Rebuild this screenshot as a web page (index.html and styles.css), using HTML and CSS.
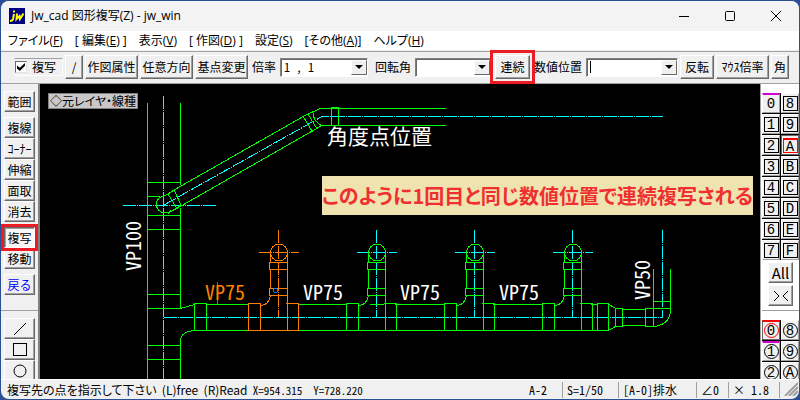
FILE: index.html
```html
<!DOCTYPE html>
<html lang="ja">
<head>
    <meta charset="UTF-8">
    <meta name="viewport" content="width=device-width, initial-scale=1.0">
    <title>Jw_cad 図形複写(Z) - jw_win</title>
    <link rel="stylesheet" href="styles.css">
</head>
<body>
<div class="window">
    <header class="titlebar">
        <svg class="app-icon" width="16" height="16" viewBox="0 0 16 16">
            <rect width="16" height="16" fill="#000080"/>
            <path d="M4 3.500h2M5 6L4 11Q3.500 13 1 13M8 5.500L7.500 11L10.500 8L11 11L14.500 5.500" fill="none" stroke="#ffff00" stroke-width="2"/>
        </svg>
        <h1>Jw_cad 図形複写(Z) - jw_win</h1>
        <div class="window-buttons">
            <button aria-label="最小化"><svg width="12" height="12"><path d="M1 6.500h10"/></svg></button>
            <button aria-label="最大化"><svg width="12" height="12"><rect x="1.500" y="1.500" width="9" height="9" rx="1"/></svg></button>
            <button aria-label="閉じる"><svg width="12" height="12"><path d="M1 1l10 10M11 1L1 11"/></svg></button>
        </div>
    </header>

    <nav class="menu">
        <a href="#">ファイル(<u>F</u>)</a>
        <a href="#">[ 編集(<u>E</u>) ]</a>
        <a href="#">表示(<u>V</u>)</a>
        <a href="#">[ 作図(<u>D</u>) ]</a>
        <a href="#">設定(<u>S</u>)</a>
        <a href="#">[その他(<u>A</u>)]</a>
        <a href="#">ヘルプ(<u>H</u>)</a>
    </nav>

    <div class="toolbar">
        <label class="check"><input type="checkbox" checked>複写</label>
        <button class="btn narrow">/</button>
        <button class="btn wide">作図属性</button>
        <button class="btn wide">任意方向</button>
        <button class="btn wide">基点変更</button>
        <label class="caption" for="scale">倍率</label>
        <div class="combo combo-scale">
            <select id="scale"><option>1 , 1</option></select>
            <span class="arrow"></span>
        </div>
        <label class="caption spaced" for="angle">回転角</label>
        <div class="combo combo-angle">
            <select id="angle"><option></option></select>
            <span class="arrow"></span>
        </div>
        <button class="btn repeat marked">連続</button>
        <label class="caption" for="offset">数値位置</label>
        <div class="combo combo-offset">
            <input type="text" id="offset" class="editing">
            <button class="arrow" aria-label="数値位置の履歴"></button>
        </div>
        <button class="btn">反転</button>
        <button class="btn wide">ﾏｳｽ倍率</button>
        <button class="btn narrow">角</button>
    </div>

    <main>
        <aside class="tools">
            <div class="tool-group">
                <button class="btn">範囲</button>
            </div>
            <div class="tool-group">
                <button class="btn">複線</button>
                <button class="btn">ｺｰﾅｰ</button>
                <button class="btn">伸縮</button>
                <button class="btn">面取</button>
                <button class="btn">消去</button>
            </div>
            <div class="tool-group">
                <button class="btn pressed marked">複写</button>
                <button class="btn">移動</button>
            </div>
            <div class="tool-group">
                <button class="btn undo">戻る</button>
            </div>
            <div class="tool-group shapes">
                <button class="btn" aria-label="線"><svg width="14" height="14"><path d="M1 13L13 1"/></svg></button>
                <button class="btn" aria-label="矩形"><svg width="14" height="14"><rect x="0.500" y="0.500" width="13" height="12"/></svg></button>
                <button class="btn" aria-label="円"><svg width="14" height="14"><circle cx="7" cy="7" r="6"/></svg></button>
            </div>
        </aside>

        <section class="canvas">
            <svg class="drawing" width="100%" height="100%">
                <defs>
                    <!-- tee joint with its riser, drawn around x = 0 -->
                    <g id="tee">
                        <path d="M-30.500 303.500h12v27h-12zM8.500 303.500h11v27h-11zM-18.500 330.500h27M6.500 303.500h2"/>
                        <path d="M-18.500 305.500q8 0 10-10M8.500 295.500v8"/>
                        <path d="M-9.500 288.500h18v7h-18zM-8.500 269.500v19M8.500 269.500v19M-9.500 262.500h18v7h-18zM-8.500 252.500v10M8.500 252.500v10"/>
                        <circle cx="0" cy="252.500" r="8.500"/>
                    </g>
                    <g id="tee-axis">
                        <path d="M-19.500 252.500h40M0.500 230v87"/>
                    </g>
                </defs>
                <g transform="translate(-40 -84)">
                    <g class="axis">
                        <path d="M163.500 96v290M123 205.500h94M163.500 317.500H662M662.500 230v88"/>
                        <path d="M163 205.500L322 116.500H663"/>
                        <use href="#tee-axis" x="376"/>
                        <use href="#tee-axis" x="474"/>
                        <use href="#tee-axis" x="572"/>
                    </g>
                    <g class="pipe">
                        <!-- VP100 riser -->
                        <path d="M147.500 103v283M180.500 103v82M180.500 208v100M180.500 339v47"/>
                        <path d="M147 182.500h34M147 196.500h13M147 215.500h34M147 229.500h34M147 294.500h34M147 308.500h34M147 345.500h34M147 359.500h34"/>
                        <!-- slanted branch -->
                        <path d="M171 210.500A8.500 8.500 0 1 1 159 198L168 194L174 190L181 205L175 209L168 213.500"/>
                        <path d="M168 194l9 15M174 190L305 115.500L320 108.500H446M175 209.500L322 125.500H446"/>
                        <path d="M303.500 117l9 15M308 114l9 15M313 112.500q0 8 8 13M331.500 107.500h7v18h-7z"/>
                        <!-- VP75 main -->
                        <path d="M180.500 308.500l14-4M180.500 339q2-8 14-8.500M194.500 303.500h12v27h-12z"/>
                        <path d="M206 304.500h42M206 330.500h42M298 304.500h48M298 330.500h48M370 304.500h14M395 304.500h49M395 330.500h49M493 304.500h49M493 330.500h49M591 304.500h6M591 330.500h6"/>
                        <use href="#tee" x="377"/>
                        <use href="#tee" x="475"/>
                        <use href="#tee" x="573"/>
                        <!-- reducer and VP50 elbow -->
                        <path d="M597.500 303.500h11v27h-11zM608.500 304l7 4.500M608.500 330.500l7-4M615.500 308.500h7v18h-7z"/>
                        <path d="M622 309.500h23M622 325.500h23M645.500 308.500h8v18h-8zM653.500 269v40M670.500 269v41M653 301.500h17M653 308.500h17M653.500 326.500Q670.500 325 670.500 309"/>
                    </g>
                    <g class="pipe selected">
                        <use href="#tee" x="279"/>
                        <use href="#tee-axis" class="dashed" x="278"/>
                    </g>
                    <path class="base-line" d="M217.500 282v22"/>
                    <circle class="base-point" cx="275.500" cy="290.500" r="2"/>
                    <text class="picked" x="205" y="300">VP75</text>
                    <text x="303" y="300">VP75</text>
                    <text x="400" y="300">VP75</text>
                    <text x="499" y="300">VP75</text>
                    <text transform="translate(650 300) rotate(-90)">VP50</text>
                    <text transform="translate(141 271) rotate(-90)">VP100</text>
                    <text class="note" x="327" y="144">角度点位置</text>
                </g>
            </svg>
            <button class="layer-label">◇元レイヤ・線種</button>
            <p class="callout">このように1回目と同じ数値位置で連続複写される</p>
        </section>

        <aside class="layers">
            <div class="layer-grid">
                <button class="edit">0</button><button><span>8</span></button>
                <button><span>1</span></button><button><span>9</span></button>
                <button><span>2</span></button><button class="current"><span>A</span></button>
                <button><span>3</span></button><button><span>B</span></button>
                <button><span>4</span></button><button><span>C</span></button>
                <button><span>5</span></button><button><span>D</span></button>
                <button><span>6</span></button><button><span>E</span></button>
                <button><span>7</span></button><button><span>F</span></button>
            </div>
            <div class="layer-actions">
                <button class="btn">All</button>
                <button class="btn" aria-label="レイヤ反転"><svg width="16" height="12"><path d="M1 1l5 5l-5 5M15 1l-5 5l5 5"/></svg></button>
            </div>
            <div class="layer-grid groups">
                <button class="current"><span>0</span></button><button><span>8</span></button>
                <button class="edit"><span>1</span></button><button><span>9</span></button>
                <button><span>2</span></button><button><span>A</span></button>
            </div>
        </aside>
    </main>

    <footer class="status">
        <p>複写先の点を指示して下さい&nbsp; (L)free&nbsp; (R)Read&nbsp; <span class="half">X=954.315&nbsp; Y=728.220</span></p>
        <button class="cell-layer">A-2</button>
        <button class="cell-scale">S=1/50</button>
        <button class="cell-name">[A-0]排水</button>
        <button class="cell-angle">∠0</button>
        <button class="cell-zoom">× 1.8</button>
        <svg class="grip" width="14" height="14"><path d="M1 14L14 1M5 14l9-9M9 14l5-5"/></svg>
    </footer>
</div>
</body>
</html>
```
FILE: styles.css
```css
* {
    box-sizing: border-box;
}

body {
    margin: 0;
    height: 100vh;
    padding: 1px;
    background-color: #2b4f96;
    font-family: "Noto Sans CJK JP", sans-serif;
    font-size: 12px;
    line-height: 16px;
    color: #000;
}

button, input, select {
    font: inherit;
    color: inherit;
    margin: 0;
    padding: 0;
}

h1, p {
    margin: 0;
    font-size: inherit;
    font-weight: normal;
}

.window {
    height: 100%;
    display: flex;
    flex-direction: column;
    background-color: #f0f0f0;
    border-radius: 8px;
    overflow: hidden;
}

/* Title bar */
.titlebar {
    display: flex;
    align-items: center;
    height: 30px;
    flex: none;
    padding-left: 8px;
    background-color: #f3f3f3;
}

.titlebar h1 {
    flex: 1;
    margin-left: 6px;
    font-family: "Open Sans", "Noto Sans CJK JP", sans-serif;
}

.window-buttons {
    display: flex;
}

.window-buttons button {
    display: flex;
    align-items: center;
    justify-content: center;
    width: 46px;
    height: 28px;
    border: none;
    background: none;
}

.window-buttons svg {
    fill: none;
    stroke: #000;
}

/* Menu */
.menu {
    display: flex;
    flex: none;
    align-items: center;
    gap: 12px;
    height: 20px;
    padding-left: 7px;
    background-color: #fff;
    border-bottom: 1px solid #f0f0f0;
    font-family: "Open Sans", "Noto Sans CJK JP", sans-serif;
    font-feature-settings: "palt";
}

.menu a {
    color: #000;
    text-decoration: none;
    white-space: nowrap;
}

/* Buttons */
.btn {
    display: flex;
    align-items: center;
    justify-content: center;
    white-space: nowrap;
    border: 1px solid;
    border-color: #fff #696969 #696969 #fff;
    box-shadow: inset -1px -1px 0 #a0a0a0;
    background-color: #f0f0f0;
}

.btn svg {
    fill: none;
    stroke: #000;
}

.btn.pressed {
    border-color: #696969 #fff #fff #696969;
    box-shadow: inset 1px 1px 0 #a0a0a0;
    background-color: #f8f8f8;
}

.btn.marked {
    position: relative;
    z-index: 2;
    outline: 3px solid #ed1c24;
}

/* Toolbar */
.toolbar {
    display: flex;
    flex: none;
    align-items: center;
    gap: 2px;
    height: 33px;
    padding: 0 10px 1px 13px;
    border-top: 1px solid #a0a0a0;
    border-bottom: 1px solid #a0a0a0;
}

.toolbar .btn {
    flex: none;
    width: 34px;
    height: 24px;
}

.toolbar .btn.narrow {
    width: 18px;
}

.toolbar .btn.wide {
    width: 53px;
}

.toolbar .btn.repeat {
    width: 35px;
    margin-left: 2px;
    outline-offset: 2px;
}

.check {
    display: flex;
    align-items: center;
    flex: none;
    gap: 5px;
    width: 49px;
    height: 18px;
    white-space: nowrap;
    border: 1px solid;
    border-color: #a0a0a0 #fff #fff #f0f0f0;
}

.check input {
    appearance: none;
    flex: none;
    width: 12px;
    height: 12px;
    border: 1px solid;
    border-color: #696969 #e3e3e3 #e3e3e3 #696969;
    background-color: #fff;
}

.check input:checked::before {
    content: "";
    display: block;
    margin: 1px;
    width: 8px;
    height: 8px;
    background-color: #000;
    clip-path: polygon(0 30%, 35% 60%, 100% 0, 100% 35%, 35% 100%, 0 70%);
}

.caption {
    flex: none;
    padding: 0 2px;
    white-space: nowrap;
}

.caption.spaced {
    margin-left: 3px;
}

.combo {
    display: flex;
    flex: none;
    height: 19px;
    border: 1px solid;
    border-color: #808080 #fff #fff #808080;
    box-shadow: inset 1px 1px 0 #696969;
    background-color: #fff;
}

.combo-scale {
    width: 88px;
}

.combo-angle {
    width: 76px;
}

.combo-offset {
    width: 92px;
}

.combo select,
.combo input {
    appearance: none;
    flex: 1;
    min-width: 0;
    padding-left: 3px;
    border: none;
    outline: none;
    background: none;
    font-feature-settings: "hwid";
}

.combo .editing {
    background: linear-gradient(#000, #000) 3px 2px / 1px 12px no-repeat;
}

.arrow {
    display: flex;
    align-items: center;
    justify-content: center;
    flex: none;
    width: 16px;
    margin: 1px 0;
    border: 1px solid;
    border-color: #fff #696969 #696969 #fff;
    background-color: #f0f0f0;
}

.arrow::before {
    content: "";
    border: 4px solid transparent;
    border-top-color: #000;
    border-bottom: none;
}

/* Work area */
main {
    display: flex;
    flex: 1;
    min-height: 0;
}

.tools {
    display: flex;
    flex-direction: column;
    flex: none;
    gap: 5px;
    width: 39px;
    padding: 7px 4px 0 3px;
    border-right: 2px solid #808080;
    overflow: hidden;
}

.tool-group .btn {
    width: 31px;
    height: 21px;
}

.tool-group .marked {
    outline-offset: 0;
}

.tool-group .undo {
    color: #0000ff;
}

.shapes {
    margin: 10px -4px 0 -3px;
    padding: 7px 4px 0 3px;
    border-top: 1px solid #a0a0a0;
}

.canvas {
    position: relative;
    flex: 1;
    min-width: 0;
    overflow: hidden;
    background-color: #000;
}

.drawing {
    display: block;
    fill: none;
    shape-rendering: crispEdges;
}

.axis {
    stroke: #00ffff;
    stroke-dasharray: 13 1 1 1;
}

.dashed {
    stroke-dasharray: 13 1 1 1;
}

.pipe {
    stroke: #00ff00;
}

.pipe.selected {
    stroke: #ff8000;
}

.base-line {
    stroke: #4060ff;
}

.base-point {
    stroke: #0080ff;
}

.drawing text {
    fill: #fff;
    font-size: 20px;
    font-feature-settings: "hwid";
}

.drawing .picked {
    fill: #ff8000;
}

.drawing .note {
    font-size: 21px;
}

.layer-label {
    position: absolute;
    top: 9px;
    left: 8px;
    height: 16px;
    padding: 0 1px;
    border: 1px solid #808080;
    background-color: #c8c8c8;
    line-height: 14px;
    font-feature-settings: "palt";
}

.callout {
    position: absolute;
    top: 92px;
    left: 282px;
    background-color: #efe3af;
    color: #f03030;
    font-size: 20px;
    font-weight: bold;
    line-height: 39px;
    white-space: nowrap;
    font-feature-settings: "palt";
}

/* Layer bars */
.layers {
    flex: none;
    width: 39px;
    padding: 9px 0 0 1px;
    border-left: 1px solid #a0a0a0;
    background-color: #fff;
    overflow: hidden;
}

.layer-grid {
    display: grid;
    grid-template-columns: 1fr 1fr;
    grid-auto-rows: 20px;
    gap: 1px;
    background-color: #000;
}

.layer-grid button {
    display: flex;
    align-items: center;
    justify-content: center;
    border: 1px solid;
    border-color: #fff #a0a0a0 #a0a0a0 #fff;
    background-color: #f0f0f0;
    font-family: "Liberation Mono", monospace;
    font-size: 14px;
}

.layer-grid span {
    width: 15px;
    height: 15px;
    border: 1px solid #000;
    line-height: 14px;
}

.layer-grid .edit {
    border-top: 2px solid #d000d0;
}

.layer-grid .current {
    border-color: #696969;
}

.layer-grid .current span {
    border-color: #ff0000;
    border-top-width: 2px;
}

.groups span {
    border-radius: 50%;
}

.groups .current {
    border-top: 2px solid #ff0000;
}

.groups .current span {
    border-top-width: 1px;
}

.layer-actions {
    display: flex;
    flex-direction: column;
    align-items: center;
    gap: 2px;
    padding: 2px 0 4px;
    margin-bottom: 9px;
    border-bottom: 1px solid #a0a0a0;
}

.layer-actions .btn {
    width: 25px;
    height: 21px;
    font-size: 15px;
}

/* Status bar */
.status {
    display: flex;
    flex: none;
    gap: 2px;
    height: 20px;
    padding: 2px 1px 1px 6px;
    border-top: 1px solid #fff;
}

.status p {
    flex: 1;
    white-space: nowrap;
    font-feature-settings: "palt";
}

.status .half {
    font-size: 11px;
    font-feature-settings: "hwid";
}

.status button {
    flex: none;
    padding-left: 2px;
    border: none;
    border-right: 1px solid #a0a0a0;
    background: none;
    text-align: left;
    white-space: nowrap;
    font-feature-settings: "hwid";
}

.cell-layer {
    width: 36px;
}

.cell-scale {
    width: 54px;
}

.cell-name {
    width: 76px;
}

.cell-angle {
    width: 30px;
}

.cell-zoom {
    width: 49px;
}

.grip {
    margin-left: 2px;
    stroke: #a0a0a0;
    stroke-width: 2;
}
```
